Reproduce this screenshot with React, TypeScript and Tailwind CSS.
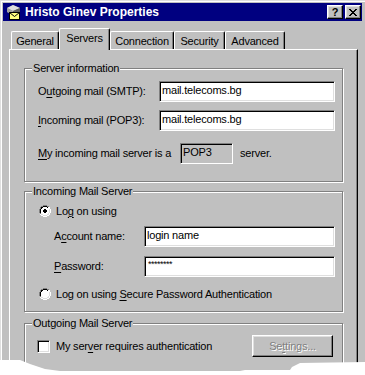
import React from "react";

const sunken =
  "border border-t-[#808080] border-l-[#808080] border-b-white border-r-white shadow-[inset_1px_1px_0_#000,inset_-1px_-1px_0_#dfdfdf]";
const raised =
  "border border-t-white border-l-white border-b-black border-r-black shadow-[inset_-1px_-1px_0_#808080,inset_1px_1px_0_#dfdfdf]";

function U({ children }: { children: React.ReactNode }) {
  return <span className="underline underline-offset-[2px] decoration-[1px]">{children}</span>;
}

function Radio({ checked }: { checked?: boolean }) {
  return (
    <svg width="12" height="12" viewBox="0 0 12 12" className="shrink-0">
      <path d="M4 0h4v1h2v1h1v2h1v4h-1v2h-1v1h-2v1h-4v-1h-2v-1h-1v-2h-1v-4h1v-2h1v-1h2z" fill="#ffffff" />
      <path d="M4 0h4v1h-4zM2 1h2v1h-2zM8 1h2v1h-2zM1 2h1v2h-1zM0 4h1v4h-1zM1 8h1v1h-1z" fill="#808080" />
      <path d="M4 1h4v1h-4zM2 2h2v1h-2zM8 2h1v1h-1zM2 3h1v1h-1zM1 4h1v4h-1z" fill="#000000" />
      <path d="M10 2h1v2h-1zM11 4h1v4h-1zM10 8h1v2h-1zM8 10h2v1h-2zM2 10h2v1h-2zM4 11h4v1h-4z" fill="#ffffff" />
      <path d="M10 4h1v4h-1zM9 8h1v2h-1zM8 9h1v1h-1zM4 10h4v1h-4zM2 9h2v1h-2z" fill="#dfdfdf" />
      {checked && <path d="M5 4h2v1h1v2h-1v1h-2v-1h-1v-2h1z" fill="#000000" />}
    </svg>
  );
}

function Group({
  label,
  className,
  children,
}: {
  label: string;
  className: string;
  children: React.ReactNode;
}) {
  return (
    <div
      className={`relative border border-[#808080] shadow-[inset_1px_1px_0_#ffffff,1px_1px_0_#ffffff] ${className}`}
    >
      <div className="absolute left-[7px] top-[-8px] bg-[#c0c0c0] px-[1px] leading-[14px]">{label}</div>
      {children}
    </div>
  );
}

function TitleIcon() {
  return (
    <svg width="16" height="16" viewBox="0 0 16 16" className="shrink-0">
      <path d="M2 4l6-3 7 3v4l-7 3-6-3z" fill="#808080" />
      <path d="M2 4l6-3 7 3-7 3z" fill="#dfdfdf" />
      <path d="M2 4l6 3v4l-6-3z" fill="#a0a0a0" />
      <path d="M8 7l7-3v4l-7 3z" fill="#606060" />
      <rect x="4.5" y="8.5" width="10" height="7" fill="#ffff80" stroke="#000" strokeWidth="1" />
      <path d="M4.5 8.5l5 4 5-4" fill="none" stroke="#000" strokeWidth="1" />
    </svg>
  );
}

function TabBtn({
  label,
  w,
  selected,
}: {
  label: React.ReactNode;
  w: string;
  selected?: boolean;
}) {
  return (
    <div
      className={`${w} flex justify-center border-t border-l border-t-white border-l-white border-r border-r-black shadow-[inset_-1px_0_0_#808080] rounded-tl-[2px] rounded-tr-[2px] bg-[#c0c0c0] ${
        selected ? "h-[22px] relative z-10 mb-[-1px] pt-[3px]" : "h-[18px] pt-[3px]"
      }`}
    >
      <span className="leading-[13px]">{label}</span>
    </div>
  );
}

export default function App() {
  return (
    <div
      className="relative w-[365px] h-[375px] overflow-hidden bg-[#c0c0c0] text-[11px] tracking-[-0.2px] text-black"
      style={{ fontFamily: '"Liberation Sans", Arial, sans-serif' }}
    >
      <div className="w-[367px] h-[400px] p-[2px] border border-t-[#dfdfdf] border-l-[#dfdfdf] border-r-black border-b-black shadow-[inset_1px_1px_0_#ffffff,inset_-1px_-1px_0_#808080]">
        {/* Title bar */}
        <div className="h-[18px] w-[359px] bg-[#000080] flex items-center pl-[2px] pr-[1px]">
          <TitleIcon />
          <div className="ml-[4px] text-white font-bold text-[12px] tracking-[0px] leading-[15px]">
            Hristo Ginev Properties
          </div>
          <div className="ml-auto flex gap-[2px]">
            <div className={`w-[16px] h-[14px] bg-[#c0c0c0] ${raised} flex items-center justify-center font-bold text-[11px] leading-none`}>
              ?
            </div>
            <div className={`w-[16px] h-[14px] bg-[#c0c0c0] ${raised} flex items-center justify-center`}>
              <svg width="8" height="7" viewBox="0 0 8 7">
                <path d="M0 0h2v1h1v1h2v-1h1v-1h2v1h-1v1h-1v1h-1v1h1v1h1v1h1v1h-2v-1h-1v-1h-2v1h-1v1h-2v-1h1v-1h1v-1h1v-1h-1v-1h-1v-1h-1z" fill="#000" />
              </svg>
            </div>
          </div>
        </div>

        {/* Tabs */}
        <div className="mt-[7px] pl-[8px] flex items-end h-[21px]">
          <TabBtn label="General" w="w-[48px]" />
          <TabBtn label="Servers" w="w-[51px]" selected />
          <TabBtn label="Connection" w="w-[64px]" />
          <TabBtn label="Security" w="w-[51px]" />
          <TabBtn label="Advanced" w="w-[60px]" />
        </div>

        {/* Panel */}
        <div className="ml-[6px] w-[349px] h-[340px] border-t border-l border-t-white border-l-white border-r border-r-black shadow-[inset_-1px_0_0_#808080] pl-[14px] pt-[18px]">
          <Group label="Server information" className="w-[319px] h-[114px] pt-[12px] pl-[13px]">
            <div className="flex items-center h-[21px]">
              <div className="w-[121px]">
                O<U>u</U>tgoing mail (SMTP):
              </div>
              <div className={`w-[176px] h-[21px] bg-white ${sunken} pl-[2px] leading-[17px]`}>mail.telecoms.bg</div>
            </div>
            <div className="flex items-center h-[21px] mt-[8px]">
              <div className="w-[121px]">
                <U>I</U>ncoming mail (POP3):
              </div>
              <div className={`w-[176px] h-[21px] bg-white ${sunken} pl-[2px] leading-[17px]`}>mail.telecoms.bg</div>
            </div>
            <div className="flex items-center h-[21px] mt-[12px]">
              <div className="w-[142px]">
                <U>M</U>y incoming mail server is a
              </div>
              <div className={`w-[53px] h-[21px] ${sunken} shadow-[inset_1px_1px_0_#000] pl-[2px] leading-[17px]`}>POP3</div>
              <div className="ml-[7px]">server.</div>
            </div>
          </Group>

          <Group label="Incoming Mail Server" className="mt-[9px] w-[319px] h-[121px] pt-[13px]">
            <div className="flex items-center h-[12px] pl-[14px] gap-[5px]">
              <Radio checked />
              <div>
                Lo<U>g</U> on using
              </div>
            </div>
            <div className="flex items-center h-[21px] mt-[9px] pl-[29px]">
              <div className="w-[90px]">
                A<U>c</U>count name:
              </div>
              <div className={`w-[191px] h-[21px] bg-white ${sunken} pl-[2px] leading-[17px]`}>login name</div>
            </div>
            <div className="flex items-center h-[21px] mt-[9px] pl-[29px]">
              <div className="w-[90px]">
                <U>P</U>assword:
              </div>
              <div className={`w-[191px] h-[21px] bg-white ${sunken} pl-[3px] text-[9px] leading-[14px] tracking-[-0.5px]`}>
                ********
              </div>
            </div>
            <div className="flex items-center h-[12px] mt-[11px] pl-[14px] gap-[5px]">
              <Radio />
              <div>
                Log on using <U>S</U>ecure Password Authentication
              </div>
            </div>
          </Group>

          <Group label="Outgoing Mail Server" className="mt-[11px] w-[319px] h-[60px] pt-[11px]">
            <div className="flex items-center pl-[12px] pr-[9px]">
              <div className={`w-[13px] h-[13px] bg-white ${sunken}`} />
              <div className="ml-[6px]">
                My ser<U>v</U>er requires authentication
              </div>
              <div
                className={`ml-auto w-[81px] h-[22px] ${raised} flex items-center justify-center text-[#808080] [text-shadow:1px_1px_0_#ffffff]`}
              >
                Se<U>t</U>tings...
              </div>
            </div>
          </Group>
        </div>
      </div>

      {/* torn bottom edge */}
      <svg className="absolute left-0 top-[350px]" width="365" height="25" viewBox="0 0 365 25">
        <path
          d="M0 10 L20 10 L30 14 L45 19 L60 21 L240 21 L245 20 L290 20 L292 17 L300 13 L365 12 L365 25 L0 25 Z"
          fill="#ffffff"
        />
      </svg>
    </div>
  );
}
